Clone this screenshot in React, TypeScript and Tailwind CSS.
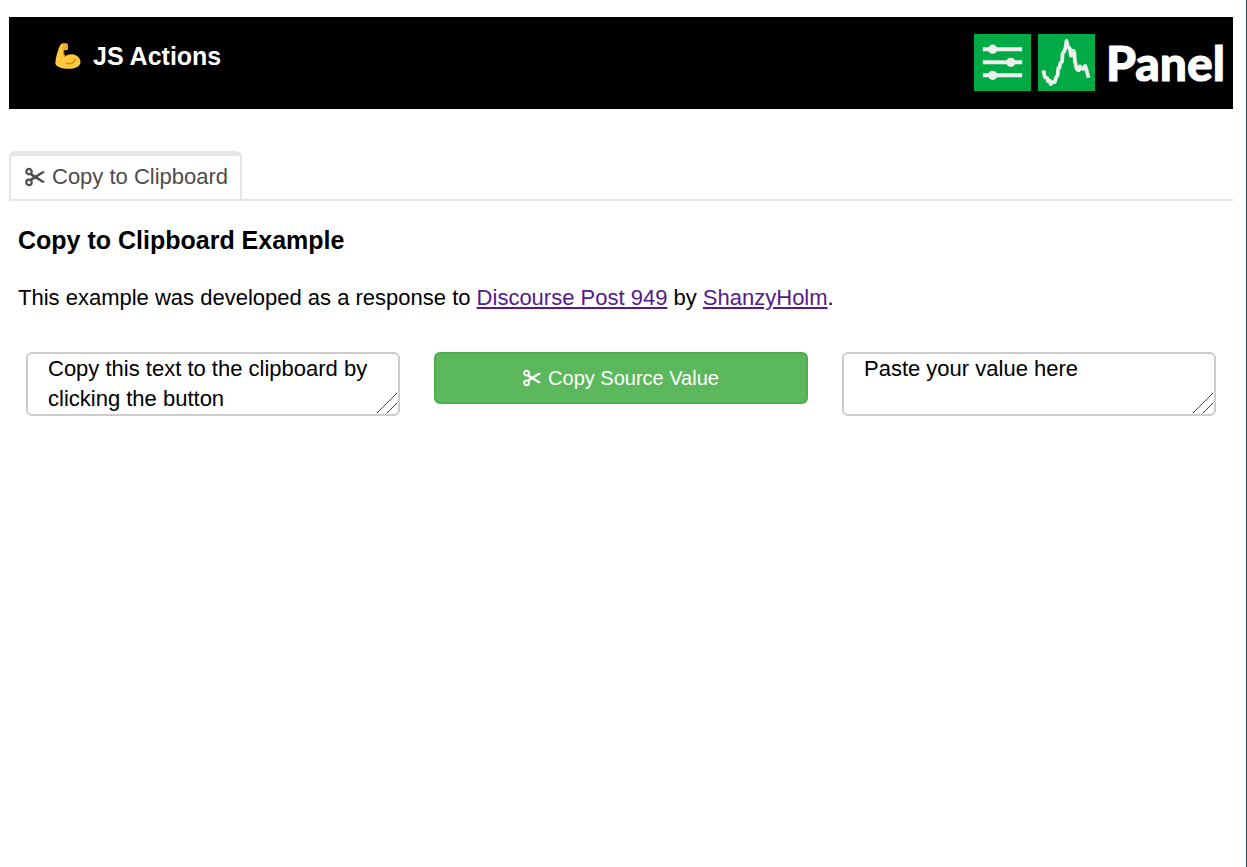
import React from "react";

function Scissors({ className = "" }: { className?: string }) {
  return (
    <svg viewBox="0 0 20 20" className={className} fill="none" stroke="currentColor" aria-hidden="true">
      <circle cx="4" cy="4.600" r="2.700" strokeWidth="2.200" />
      <circle cx="4" cy="15.400" r="2.700" strokeWidth="2.200" />
      <path d="M6.200 5.800 19.700 14.400 19.400 15.400 17.200 15.700 5.400 8.600Z" fill="currentColor" stroke="none" />
      <path d="M6.200 14.200 19.700 5.600 19.400 4.600 17.200 4.300 5.400 11.400Z" fill="currentColor" stroke="none" />
    </svg>
  );
}

function Biceps() {
  return (
    <svg viewBox="0 0 26 26" className="h-[26px] w-[26px]" aria-hidden="true">
      <path
        d="M5.6 1.6C6.5.3 8 .2 9.4.3c1.700 0 3.200.4 3.500 1.600.4 1.200.3 3.700-.2 4.700-.5.8-2.700.8-4.200.3-.2 2.600.1 4.700 1.500 6.800 1.400-1.900 4.500-3 7.800-2.400 4.200.8 7.800 3.900 7.700 7.600-.1 4.600-5.500 6.800-11.900 6.800C6.700 25.700.4 23.400.4 20.400.4 15.500 3 6.600 5.600 1.600Z"
        fill="#ffc83d"
      />
      <path d="M7.300 2.200c1.600-.6 3.600-.4 4.700.2v2.300c-1.600.7-3.600.5-5-.2M8.500 6.800c-.2 2.600.1 4.900 1.600 7" fill="none" stroke="#d68a1c" strokeWidth="1.100" />
      <path d="M11.500 20.200c4 1.300 7.800.1 8.800-3.900" fill="none" stroke="#d68a1c" strokeWidth="1.400" strokeLinecap="round" />
    </svg>
  );
}

function SlidersTile() {
  return (
    <svg viewBox="0 0 58 58" className="h-[57px] w-[57px]" aria-hidden="true">
      <rect width="58" height="58" fill="#00ab45" />
      <path d="M9 15.500h40M9 28.800h40M9 42h40" stroke="#eee" strokeWidth="4.200" />
      <g fill="#eee">
        <circle cx="19" cy="15.500" r="4.700" />
        <circle cx="37.500" cy="28.800" r="4.700" />
        <circle cx="19" cy="42" r="4.700" />
      </g>
    </svg>
  );
}

function ChartTile() {
  return (
    <svg viewBox="0 0 58 58" className="h-[57px] w-[57px]" aria-hidden="true">
      <rect width="58" height="58" fill="#00ab45" />
      <path
        d="M5.500 37 7 44l2.500 1 .5 3 2-.5L13 51l2-2 2 0 1.500-5 1.500-2 .5-7 1.500-1 .5-4 2-2 .5-8 1.500-2L28 14l1-7 1.500 6 2 2 1 7 2-1 .5-4 1 2 .5 8 1 5 1 4 2 1 1-4 2 2 2 .5 1.500-3 1.500 4 .5 3 1.500 5"
        fill="none"
        stroke="#eee"
        strokeWidth="3.800"
        strokeLinejoin="round"
      />
    </svg>
  );
}

function TextBox({ label, value }: { label: string; value: string }) {
  return (
    <div className="relative">
      <textarea
        aria-label={label}
        defaultValue={value}
        className="block h-16 w-full resize-none overflow-hidden rounded-md border-2 border-[#ccc] bg-white px-5 text-[22px] leading-[30px] text-black"
      />
      <svg viewBox="0 0 20 20" className="pointer-events-none absolute right-[3px] bottom-[3px] h-5 w-5" stroke="#444" aria-hidden="true">
        <path d="M0 20 20 0M10 20 20 10" />
      </svg>
    </div>
  );
}

export default function App() {
  return (
    <div className="min-h-screen border-r border-[#263943] bg-white pt-[17px] pr-[13px] pl-[9px] font-['Liberation_Sans',Arial,sans-serif] text-black">
      <header className="flex h-[92px] items-start justify-between bg-black pt-[17px] pr-2 pl-[46px] text-white">
        <h1 className="flex items-center gap-3 pt-2 text-[25px] leading-7 font-bold">
          <Biceps />
          JS Actions
        </h1>
        <div className="flex items-center gap-[7px]">
          <SlidersTile />
          <ChartTile />
          <span className="pl-1 font-['Lato',sans-serif] text-[48px] leading-[57px] font-black [-webkit-text-stroke:1px_white]">Panel</span>
        </div>
      </header>

      <nav className="mt-[42px] flex border-b-2 border-[#e6e6e6]" role="tablist">
        <button
          type="button"
          role="tab"
          aria-selected="true"
          className="flex h-12 items-center gap-[7px] rounded-t-md border-x-2 border-t-[5px] border-[#e6e6e6] pr-3 pb-0.5 pl-3.5 text-[22px] leading-7 text-[#4d4d4d]"
        >
          <Scissors className="h-5 w-5" />
          Copy to Clipboard
        </button>
      </nav>

      <main className="px-[9px] pt-6">
        <h2 className="text-[25px] leading-[30px] font-bold">Copy to Clipboard Example</h2>
        <p className="mt-7 text-[22px] leading-[30px]">
          This example was developed as a response to{" "}
          <a href="#discourse" className="text-[#551a8b] underline">Discourse Post 949</a> by{" "}
          <a href="#author" className="text-[#551a8b] underline">ShanzyHolm</a>.
        </p>
        <div className="mt-[39px] grid grid-cols-3 items-start gap-[34px] px-2">
          <TextBox label="Source value" value="Copy this text to the clipboard by clicking the button" />
          <button
            type="button"
            className="flex h-[52px] w-full items-center justify-center gap-[7px] rounded-md border-2 border-[#4cae4c] bg-[#5cb85c] text-[20px] leading-7 text-white"
          >
            <Scissors className="h-[18px] w-[18px]" />
            Copy Source Value
          </button>
          <TextBox label="Paste value" value="Paste your value here" />
        </div>
      </main>
    </div>
  );
}
